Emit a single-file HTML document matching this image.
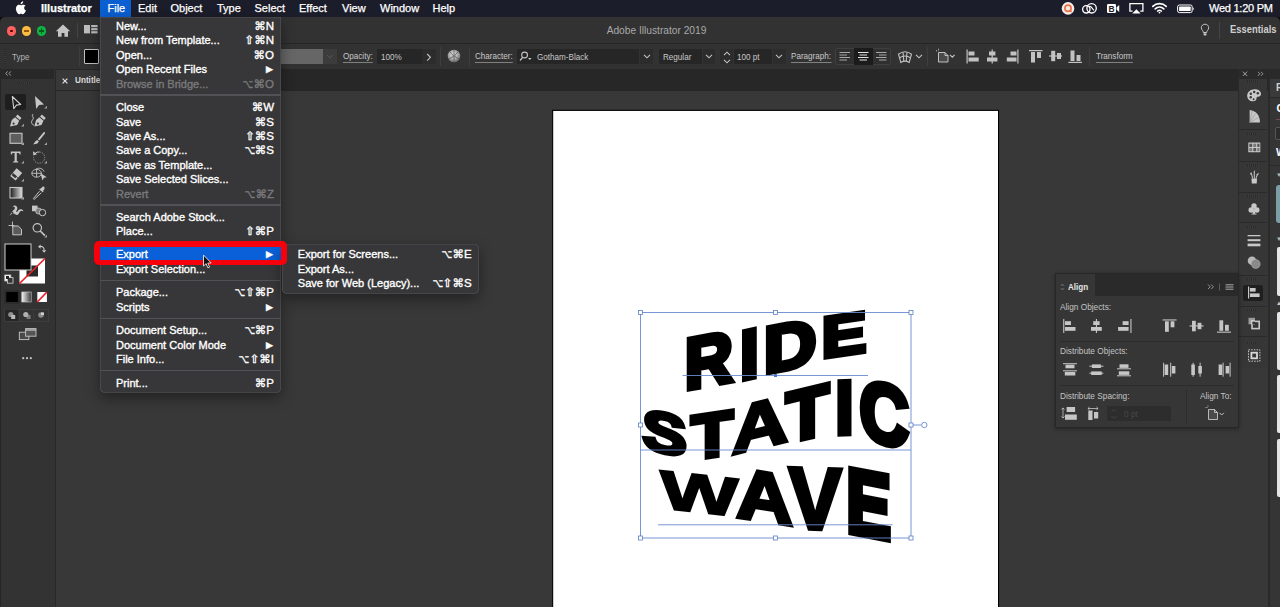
<!DOCTYPE html>
<html><head><meta charset="utf-8">
<style>
*{box-sizing:border-box;margin:0;padding:0}
html,body{width:1280px;height:607px;overflow:hidden;background:#3a3a3a;font-family:"Liberation Sans","DejaVu Sans",sans-serif;}
.abs{position:absolute}
#menubar{position:absolute;left:0;top:0;width:1280px;height:17px;background:#1c1d2a;color:#fff;font-size:11px;}
#menubar span{position:absolute;top:1px;line-height:15px;white-space:nowrap;-webkit-text-stroke:0.25px}
#titlebar{position:absolute;left:0;top:17px;width:1280px;height:27px;background:#323232;border-radius:5px 5px 0 0;border-bottom:1px solid #262626}
#ctrlbar{position:absolute;left:0;top:44px;width:1280px;height:25px;background:#323232;color:#c8c8c8;font-size:9px}
#ctrlbar span{position:absolute;white-space:nowrap;line-height:12px;transform:scaleX(.9);transform-origin:0 50%}
#tabbar{position:absolute;left:0;top:69px;width:1280px;height:22px;background:#272727}
#canvas{position:absolute;left:54px;top:91px;width:1226px;height:516px;background:#383838}
#toolbox{position:absolute;left:0;top:69px;width:55.500px;height:538px;background:#333;border-right:1.500px solid #282828;border-left:1px solid #262626}
#artboard{position:absolute;left:553px;top:110px;width:446px;height:500px;background:#fff;border:1px solid #000}
.menu{position:absolute;background:#373739;color:#fff;font-size:11px;-webkit-text-stroke:0.35px;box-shadow:0 0 0 0.6px rgba(110,110,115,.55) inset,0 5px 14px rgba(0,0,0,.4);}
.menu .it{position:absolute;left:0;right:0;height:15px;line-height:15px;white-space:nowrap;margin-top:.4px}
.menu .it b{font-weight:normal;position:absolute;left:16px}
.menu .it i{font-style:normal;position:absolute;right:7px;font-size:11.5px}
.menu .dis{color:#7a7a7c}
.menu .sep{position:absolute;left:0;right:0;height:1.300px;background:#525256}
.fld{position:absolute;top:5px;height:15px;background:#262626;border-radius:1px}
#ctrlbar .ul{border-bottom:1px solid #808080;line-height:11px}
.menu .sel{background:#0a60d8;height:14.400px!important;line-height:14.400px!important;margin-top:0!important}
.menu .arr{font-size:9px!important;right:8px!important}
.lbl{position:absolute;font-size:9px;color:#c4c4c4;line-height:12px;white-space:nowrap;transform:scaleX(.92);transform-origin:0 50%}
.menu .it i u{text-decoration:none;display:inline-block;transform:scaleX(.8);transform-origin:100% 50%;margin-left:-2px}
</style></head><body>
<div id="canvas"></div>
<svg class="abs" id="art" style="left:0;top:0" width="1280" height="607" viewBox="0 0 1280 607">
<rect x="552.650" y="110.350" width="445.900" height="500" fill="#fff" stroke="#000" stroke-width="1.100"/>
<defs><filter id="bl" x="-5%" y="-5%" width="110%" height="110%"><feGaussianBlur stdDeviation="0.55"/></filter></defs>
<g filter="url(#bl)" font-family="Liberation Sans, sans-serif" font-weight="bold" font-size="100" fill="#000" stroke="#000" stroke-width="7.5" stroke-linejoin="miter">
<text stroke-width="7.5" transform="matrix(0.667 -0.124 0 0.721 684.73 389.76)">R</text>
<text stroke-width="7.5" transform="matrix(0.676 -0.146 0 0.693 739.91 380.13)">I</text>
<text stroke-width="7.5" transform="matrix(0.730 -0.138 0 0.659 763.65 373.69)">D</text>
<text stroke-width="7.5" transform="matrix(0.675 -0.097 0 0.578 821.41 358.02)">E</text>
<text stroke-width="7.5" transform="matrix(0.663 0.145 0 0.566 642.56 447.74)">S</text>
<text stroke-width="7.5" transform="matrix(0.684 -0.102 0 0.623 691.21 459.69)">T</text>
<text stroke-width="5.0" transform="matrix(0.786 -0.191 0 0.667 731.50 454.83)">A</text>
<text stroke-width="7.5" transform="matrix(0.703 -0.169 0 0.709 785.96 442.89)">T</text>
<text stroke-width="7.5" transform="matrix(0.644 -0.023 0 0.752 835.60 433.90)">I</text>
<text stroke-width="7.5" transform="matrix(0.682 0.170 0 0.845 859.46 436.92)">C</text>
<text stroke-width="3.5" transform="matrix(0.827 0.091 0 0.544 660.26 507.95)">W</text>
<text stroke-width="5.0" transform="matrix(0.791 0.123 0 0.713 736.00 516.97)">A</text>
<text stroke-width="5.0" transform="matrix(0.791 0.027 0 0.874 788.82 527.91)">V</text>
<text stroke-width="7.5" transform="matrix(0.671 0.129 0 0.913 846.22 531.19)">E</text>
</g>
<g fill="none" stroke="#6a8bd0" stroke-width="0.9">
<rect x="640.500" y="312.500" width="270.500" height="225.500"/>
<path d="M682.500 375.500H868M640.500 450H911M658 524.800H892.500M913 425H921"/>
<circle cx="924.300" cy="425" r="2.700" fill="#fff"/>
</g>
<rect x="774" y="374" width="3" height="3" fill="#4a78d8"/>
<rect x="638.5" y="310.5" width="4" height="4" fill="#fff" stroke="#5b7fc7" stroke-width="0.8"/><rect x="773.5" y="310.5" width="4" height="4" fill="#fff" stroke="#5b7fc7" stroke-width="0.8"/><rect x="909.0" y="310.5" width="4" height="4" fill="#fff" stroke="#5b7fc7" stroke-width="0.8"/><rect x="638.5" y="423.0" width="4" height="4" fill="#fff" stroke="#5b7fc7" stroke-width="0.8"/><rect x="909.0" y="423.0" width="4" height="4" fill="#fff" stroke="#5b7fc7" stroke-width="0.8"/><rect x="638.5" y="536.0" width="4" height="4" fill="#fff" stroke="#5b7fc7" stroke-width="0.8"/><rect x="773.5" y="536.0" width="4" height="4" fill="#fff" stroke="#5b7fc7" stroke-width="0.8"/><rect x="909.0" y="536.0" width="4" height="4" fill="#fff" stroke="#5b7fc7" stroke-width="0.8"/>
</svg>
<div class="abs" style="left:0;top:17px;width:1280px;height:8px;background:#0c0c10"></div>
<div id="tabbar">
<div class="abs" style="left:56px;top:0.500px;width:225px;height:20.500px;background:#383838"></div>
<svg class="abs" style="left:61.500px;top:8.500px" width="6" height="6" viewBox="0 0 6 6"><path d="M0.600 0.600l4.800 4.800M5.400 0.600L0.600 5.400" stroke="#e0e0e0" stroke-width="1.200"/></svg>
<div class="abs" style="left:74.500px;top:5px;font-size:9.500px;font-weight:bold;color:#dcdcdc;line-height:12px;white-space:nowrap;transform:scaleX(.86);transform-origin:0 50%">Untitled-1*</div>
</div>
<div id="toolbox"><div class="abs" style="left:-1px;top:0;width:54px;height:538px">
<div class="abs" style="left:0;top:0;width:54px;height:9.500px;background:#282828"></div>
<svg class="abs" style="left:4.500px;top:2px" width="7" height="5" viewBox="0 0 7 5"><path d="M2.600 0.400L0.800 2.500l1.800 2.100M5.800 0.400L4 2.500l1.800 2.100" fill="none" stroke="#a8a8a8" stroke-width="0.900"/></svg>
<div class="abs" style="left:19px;top:12.500px;width:15px;height:2.500px;background:repeating-linear-gradient(90deg,#2a2a2a 0 1px,#3a3a3a 1px 2px)"></div>
<div class="abs" style="left:5px;top:25px;width:21px;height:16px;background:#1e1e1e;border-radius:2px"></div>
<svg class="abs" style="left:0;top:0" width="54" height="150" viewBox="0 69 54 150">
<g fill="#c6c6c6" stroke="none">
<!-- row1: selection tools (center y 102.500) -->
<path d="M12.300 96.500l8.400 8-4.300 0.600-2.600 3.600z" fill="none" stroke="#d0d0d0" stroke-width="1.100" stroke-linejoin="round"/>
<path d="M35 96l9 8.600-5 0.500-2.800 3.900z"/>
<path d="M47 108.500v-2.800l-2.800 2.800z" fill="#a4a4a4"/>
<!-- row2: pen, curvature (y 120.500) -->
<g transform="translate(9.300 113) scale(1.15)"><path d="M7.200 1.300l3.400 3-1.500 1.800-3.500-3zM5 3.800l3.600 3-1.700 3.600L0.600 11.800 2.200 6zM3.700 8.300a0.900 0.900 0 1 0 0.100 0z" fill-rule="evenodd"/></g>
<path d="M24 126.500v-2.800l-2.800 2.800z" fill="#a4a4a4"/>
<g transform="translate(33.600 113) scale(1.15)"><path d="M7.200 1.300l3.400 3-1.500 1.800-3.500-3zM5 3.800l3.600 3-1.700 3.600L0.600 11.800 2.200 6zM3.700 8.300a0.900 0.900 0 1 0 0.100 0z" fill-rule="evenodd"/></g>
<path d="M33.200 114c-2.600 2 1.600 3.200-0.500 5.600-1.600 1.800-1.700 4.600 1.200 5.400" fill="none" stroke="#c6c6c6" stroke-width="1"/>
<!-- row3: rect, brush (y 138.500) -->
<rect x="10" y="133.300" width="12" height="10" fill="#5e5e5e" stroke="#c6c6c6" stroke-width="1.100"/>
<path d="M24 145v-2.800l-2.800 2.800z" fill="#a4a4a4"/>
<path d="M44.600 132.200c0.700 0.400 0.500 1.200 0 1.900l-5.300 6.400-1.500-1.200 5.200-6.400c0.500-0.700 1.100-1 1.600-0.700zM37.200 140l1.600 1.300c-0.400 2-2.600 3.300-5.800 3 1.600-0.800 1.600-3.200 4.200-4.300z"/>
<path d="M47 145v-2.800l-2.800 2.800z" fill="#a4a4a4"/>
<!-- row4: type, rotate (y 157) -->
<path d="M10.800 151.500h9.800v2.900h-1c-0.200-1.200-0.500-1.500-1.600-1.500h-1.200v7.500c0 0.800 0.300 1 1.500 1.100v0.900h-5.200v-0.900c1.200-0.100 1.500-0.300 1.500-1.100v-7.500h-1.200c-1.100 0-1.400 0.300-1.600 1.500h-1z"/>
<path d="M24 163.500v-2.800l-2.800 2.800z" fill="#a4a4a4"/>
<path d="M35.200 153.200a5.600 5.600 0 0 1 4.200-1.200" fill="none" stroke="#c6c6c6" stroke-width="1"/>
<path d="M39.400 152a5.600 5.600 0 1 1-5.800 5" fill="none" stroke="#a0a0a0" stroke-width="0.800" stroke-dasharray="1.500 1"/>
<path d="M33 151.200l0.300 4.200 3.700-1.200z"/>
<path d="M47 163.500v-2.800l-2.800 2.800z" fill="#a4a4a4"/>
<!-- row5: eraser, shape builder (y 175) -->
<path d="M16.600 168.300l5.600 4.600-6.600 7.600-5.400-4.500z" />
<path d="M12.400 173.300l5.500 4.600" stroke="#353535" stroke-width="0.900"/>
<path d="M11.700 175.200l3.500 3 1.700-2-3.600-3z" fill="#353535"/>
<path d="M24 181.500v-2.800l-2.800 2.800z" fill="#a4a4a4"/>
<g fill="none" stroke="#c6c6c6" stroke-width="0.900"><ellipse cx="36.600" cy="173.300" rx="4.800" ry="3.900"/><path d="M36.600 169.400v7.800M31.800 173.300h9.600"/><path d="M36 169c3-1.600 7.200-0.600 8 2.600"/></g>
<path d="M40.500 173l6.200 4.300-2.800 0.500-1.500 2.800z"/>
<!-- row6: gradient, eyedropper (y 193) -->
<rect x="10" y="187.500" width="12" height="10.500" fill="url(#gg)" stroke="#c6c6c6" stroke-width="1.100"/>
<path d="M24 199.500v-2.800l-2.800 2.800z" fill="#a4a4a4"/>
<path d="M43.600 186.600c1.100 0.700 1.300 1.900 0.600 2.800l-1.100 1.300 0.600 0.500-0.900 1.100-3.600-2.900 0.900-1.100 0.600 0.500 1.100-1.400c0.600-0.800 1.200-1.100 1.800-0.800z"/>
<path d="M39.500 191.200l-5.800 7c-0.500 0.600-0.200 1.300 0.700 1l6.900-6.400" fill="none" stroke="#c6c6c6" stroke-width="1"/>
<!-- row7: puppet warp, blend (y 211) -->
<path d="M9.500 215.500c1.500-0.500 2.300-2.300 3.500-2.200 1.500 0 2 1.800 4 1.600 2.500-0.200 1.800-3.600 4-4 1-0.200 1.600 0.600 2.400 0.300-0.800-2.300-3.700-2.600-5.200-0.600-1.100 1.500-1.300 1.600-2.200 0.700 1-1 2.400-3.400 0.200-5.300-1.400-1.200-3.200-0.200-3.700 0.700 1.600-0.500 2.600 0.300 2.300 1.700-0.300 1.600-2.400 1.800-3.200 3.800-0.300 0.800-1 2-2.100 3.300z"/>
<circle cx="12.300" cy="212.600" r="1" fill="#353535"/>
<rect x="32" y="205.600" width="5.600" height="5.600"/>
<circle cx="38.600" cy="211" r="3" fill="#7a7a7a" stroke="#c6c6c6" stroke-width="0.800"/>
<circle cx="42.500" cy="212.600" r="3.200" fill="#353535" stroke="#c6c6c6" stroke-width="1"/>
</g></svg>
<svg class="abs" style="left:0;top:150px" width="54" height="150" viewBox="0 219 54 150">
<defs><linearGradient id="gg" x1="0" x2="1"><stop offset="0" stop-color="#1a1a1a"/><stop offset="1" stop-color="#e0e0e0"/></linearGradient></defs>
<!-- row8: artboard, zoom (y 229) -->
<g fill="none" stroke="#c6c6c6" stroke-width="1"><path d="M12.500 221.500v6M8.500 225.500h6" stroke-width="0.900"/><path d="M12.800 226h5.400l3.300 3.200v5.600h-8.700z" fill="#5a5a5a"/></g>
<circle cx="37.300" cy="227.800" r="4.200" fill="none" stroke="#c6c6c6" stroke-width="1.200"/><path d="M40.300 231l4.600 4.600" stroke="#c6c6c6" stroke-width="1.700"/>
<path d="M47 237.500v-2.800l-2.800 2.800z" fill="#a4a4a4"/>
<!-- fill/stroke -->
<rect x="19.500" y="258.500" width="25.500" height="25" fill="#fff"/><rect x="26.500" y="265.500" width="11.500" height="11" fill="#2a2a2a"/>
<path d="M19.500 283.500L45 258.500" stroke="#e8202a" stroke-width="1.700"/>
<rect x="5" y="244" width="26" height="26" fill="#000" stroke="#cfcfcf" stroke-width="1"/>
<path d="M39.500 246.500c3-0.600 4.800 1 4.600 4" fill="none" stroke="#c6c6c6" stroke-width="1.100"/><path d="M38 246.700l2.600-2.200v4.200zM44.200 252.700l-2.300-2.500h4.400z" fill="#c6c6c6"/>
<rect x="4.800" y="275" width="6" height="6" fill="#fff" stroke="#c6c6c6" stroke-width="0.800"/><rect x="7.400" y="277.600" width="5.600" height="5.600" fill="#353535" stroke="#c6c6c6" stroke-width="0.900"/><rect x="6" y="276" width="3" height="3" fill="#222"/>
<!-- color row -->
<rect x="4.600" y="290.300" width="15" height="13.400" fill="#2a2a2a"/>
<rect x="6.300" y="292" width="11.600" height="10" fill="#000"/>
<rect x="21.800" y="292" width="9.400" height="10" fill="url(#gg2)" stroke="#cfcfcf" stroke-width="0.600"/>
<rect x="37.300" y="292" width="9.600" height="10" fill="#fff"/><path d="M37.300 302L46.900 292" stroke="#e8202a" stroke-width="1.800"/>
<!-- draw modes -->
<rect x="4.800" y="309.300" width="43.800" height="12" fill="none" stroke="#424242" stroke-width="0.800"/>
<rect x="5.200" y="309.700" width="13.600" height="11.200" fill="#262626"/>
<path d="M19.200 309.300v12M33.800 309.300v12" stroke="#424242" stroke-width="0.800"/>
<circle cx="10.800" cy="314.500" r="2.600" fill="#909090"/><rect x="11.200" y="315" width="4" height="4" fill="#b8b8b8"/>
<rect x="26.600" y="315" width="4" height="4" fill="#7a7a7a"/><circle cx="25.800" cy="314.500" r="2.600" fill="#b0b0b0"/>
<circle cx="41" cy="315" r="2.800" fill="#8a8a8a"/><path d="M41 315h3v-2.600h-3z" fill="#d0d0d0"/>
<!-- screen mode -->
<rect x="19.300" y="332.200" width="9.600" height="7.400" fill="#4a4a4a" stroke="#c6c6c6" stroke-width="0.900"/>
<rect x="25.600" y="328.600" width="10.400" height="7.600" fill="#555" stroke="#c6c6c6" stroke-width="0.900"/><path d="M25.600 330h10.400" stroke="#c6c6c6" stroke-width="1.300"/>
<circle cx="23.200" cy="358.200" r="1.100" fill="#c6c6c6"/><circle cx="27" cy="358.200" r="1.100" fill="#c6c6c6"/><circle cx="30.800" cy="358.200" r="1.100" fill="#c6c6c6"/>
<defs><linearGradient id="gg2" x1="0" x2="1"><stop offset="0" stop-color="#f4f4f4"/><stop offset="1" stop-color="#3a3a3a"/></linearGradient></defs>
</svg>
</div></div>
<div id="ctrlbar">
<div class="abs" style="left:4px;top:5px;width:2px;height:15px;background:repeating-linear-gradient(#282828 0 1px,#3a3a3a 1px 2px)"></div>
<span style="left:11.5px;top:6.5px;color:#b4b4b4">Type</span>
<div class="abs" style="left:79px;top:3px;width:1px;height:19px;background:#3e3e3e"></div>
<div class="abs" style="left:84px;top:5px;width:14.5px;height:15px;background:#000;border:1px solid #c0c0c0;border-radius:1px"></div>
<div class="abs" style="left:280px;top:5px;width:43px;height:15px;background:#666"></div>
<div class="abs" style="left:323px;top:5px;width:14px;height:15px;background:#3c3c3c"></div>
<svg class="abs" style="left:326px;top:10px" width="8" height="5" viewBox="0 0 8 5"><path d="M1 1l3 3 3-3" fill="none" stroke="#555" stroke-width="1"/></svg>
<span class="ul" style="left:342.5px;top:6.5px">Opacity:</span>
<div class="fld" style="left:377px;width:44.500px"></div><span style="left:380.5px;top:6.5px">100%</span>
<div class="fld" style="left:422px;width:13.500px;background:#2c2c2c"></div>
<svg class="abs" style="left:425.500px;top:8.500px" width="6" height="9" viewBox="0 0 6 9"><path d="M1.200 1l3.200 3.300-3.200 3.300" fill="none" stroke="#c4c4c4" stroke-width="1.100"/></svg>
<div class="abs" style="left:440px;top:3px;width:1px;height:19px;background:#3e3e3e"></div>
<svg class="abs" style="left:447px;top:5px" width="14" height="14" viewBox="0 0 14 14"><defs><radialGradient id="gl" cx="0.45" cy="0.4" r="0.6"><stop offset="0" stop-color="#e8e8e8"/><stop offset="0.600" stop-color="#a8a8a8"/><stop offset="1" stop-color="#6a6a6a"/></radialGradient></defs><circle cx="7" cy="7" r="6.300" fill="url(#gl)"/><g stroke="#555" stroke-width="0.700" fill="none"><path d="M7 0.700v12.600M7 7L1.600 10.200M7 7l5.400 3.200M7 7L2.500 2.500M7 7l4.500-4.500"/></g><circle cx="7" cy="7" r="1.600" fill="#777"/></svg>
<div class="abs" style="left:468.500px;top:3px;width:1px;height:19px;background:#3e3e3e"></div>
<span class="ul" style="left:475px;top:6.500px">Character:</span>
<div class="fld" style="left:516.500px;width:122px"></div>
<svg class="abs" style="left:519px;top:7px" width="14" height="11" viewBox="0 0 14 11"><circle cx="5.600" cy="4" r="2.900" fill="none" stroke="#c4c4c4" stroke-width="1.100"/><path d="M3.700 6.300L1 9.500" stroke="#c4c4c4" stroke-width="1.300"/><path d="M9 7h3.600l-1.800 2z" fill="#c4c4c4"/></svg>
<span style="left:536.500px;top:6.500px">Gotham-Black</span>
<div class="fld" style="left:639.500px;width:13px;background:#2c2c2c"></div>
<svg class="abs chev" style="left:642.500px;top:10px" width="8" height="5" viewBox="0 0 8 5"><path d="M1 0.800l3 3 3-3" fill="none" stroke="#c4c4c4" stroke-width="1.100"/></svg>
<div class="fld" style="left:658.500px;width:43px"></div><span style="left:663px;top:6.500px">Regular</span>
<div class="fld" style="left:702.500px;width:12px;background:#2c2c2c"></div>
<svg class="abs chev" style="left:704.500px;top:10px" width="8" height="5" viewBox="0 0 8 5"><path d="M1 0.800l3 3 3-3" fill="none" stroke="#c4c4c4" stroke-width="1.100"/></svg>
<div class="fld" style="left:720px;width:13px;background:#2c2c2c"></div>
<svg class="abs" style="left:722.500px;top:6.500px" width="8" height="13" viewBox="0 0 8 13"><path d="M1 4.200l3-3 3 3M1 8.800l3 3 3-3" fill="none" stroke="#c4c4c4" stroke-width="1.100"/></svg>
<div class="fld" style="left:734px;width:37.500px"></div><span style="left:736.500px;top:6.500px">100 pt</span>
<div class="fld" style="left:772.500px;width:13px;background:#2c2c2c"></div>
<svg class="abs chev" style="left:775px;top:10px" width="8" height="5" viewBox="0 0 8 5"><path d="M1 0.800l3 3 3-3" fill="none" stroke="#c4c4c4" stroke-width="1.100"/></svg>
<span class="ul" style="left:791px;top:6.500px">Paragraph:</span>
<div class="abs" style="left:835px;top:4px;width:56px;height:17px;border:1px solid #3f3f3f;border-radius:2px;background:#2f2f2f"></div>
<div class="abs" style="left:854px;top:4px;width:18.500px;height:17px;background:#1b1b1b"></div>
<svg class="abs" style="left:835px;top:4px" width="56" height="17" viewBox="0 0 56 17"><g stroke="#a8a8a8" stroke-width="1"><path d="M4.500 4.500h10.500M4.500 7h7.500M4.500 9.500h10.500M4.500 12h7.500"/><path d="M41 4.500h10.500M44 7h7.500M41 9.500h10.500M44 12h7.500"/></g><g stroke="#e4e4e4" stroke-width="1.100"><path d="M23 4.500h10.500M24.500 7h7.500M23 9.500h10.500M24.500 12h7.500"/></g></svg>
<svg class="abs" style="left:896.500px;top:4.500px" width="16" height="16" viewBox="0 0 16 16"><g fill="none" stroke="#c0c0c0" stroke-width="1.100"><path d="M1.500 5.200c4-3 9-3 13 0l-2.300 8.300c-2.700-1.700-5.700-1.700-8.400 0z"/><path d="M6 3.300l0.800 9M10 3.300l-0.800 9M2.500 8.700c3.600-2.200 7.400-2.200 11 0"/></g></svg>
<svg class="abs chev" style="left:914.500px;top:10px" width="8" height="5" viewBox="0 0 8 5"><path d="M1 0.800l3 3 3-3" fill="none" stroke="#c4c4c4" stroke-width="1.100"/></svg>
<div class="abs" style="left:926.500px;top:3px;width:1px;height:19px;background:#3e3e3e"></div>
<svg class="abs" style="left:934px;top:4px" width="24" height="17" viewBox="0 0 24 17"><g fill="none" stroke="#c0c0c0" stroke-width="1"><path d="M4.500 4.500h6.500l3 3v6.500h-9.500z" fill="#4a4a4a"/><path d="M11 4.500v3h3"/></g><path d="M2 2.800h2.500M4.500 0.800v2" stroke="#c0c0c0" stroke-width="1" stroke-dasharray="1 1"/><path d="M16 6.800l2.300 2.300 2.300-2.300" fill="none" stroke="#c4c4c4" stroke-width="1.100"/></svg>
<!-- align icons -->
<svg class="abs" style="left:962px;top:3px" width="124" height="19" viewBox="0 0 124 19"><g fill="#c2c2c2">
<rect x="4.500" y="2.500" width="1.200" height="14"/><rect x="6.500" y="4.500" width="6" height="4"/><rect x="6.500" y="10.500" width="10.200" height="4"/>
<rect x="29.600" y="2.500" width="1.200" height="14"/><rect x="27" y="4.500" width="6.400" height="4"/><rect x="25" y="10.500" width="10.400" height="4"/>
<rect x="55.300" y="2.500" width="1.200" height="14"/><rect x="48.500" y="4.500" width="6" height="4"/><rect x="44.800" y="10.500" width="9.700" height="4"/>
<rect x="67" y="3" width="13.600" height="1.200"/><rect x="69" y="5" width="4" height="10.500"/><rect x="75" y="5" width="4" height="6"/>
<rect x="87" y="8.400" width="13" height="1.200"/><rect x="89.200" y="3.800" width="4" height="10.400"/><rect x="95" y="6" width="4" height="6"/>
<rect x="106.400" y="14.800" width="13.600" height="1.200"/><rect x="108.500" y="3.500" width="4" height="10.500"/><rect x="114.500" y="8" width="4" height="6"/>
</g></svg>
<div class="abs" style="left:1089px;top:3px;width:1px;height:19px;background:#3e3e3e"></div>
<span class="ul" style="left:1096px;top:6.500px">Transform</span>
</div>
<div id="titlebar">
<div class="abs" style="left:6.6px;top:9.3px;width:9.4px;height:9.4px;border-radius:50%;background:#fc615d"></div><div class="abs" style="left:10px;top:12.7px;width:2.6px;height:2.6px;border-radius:50%;background:#4c0102"></div>
<div class="abs" style="left:21.8px;top:9.3px;width:9.4px;height:9.4px;border-radius:50%;background:#fdbd41"></div><div class="abs" style="left:23.7px;top:13.3px;width:5.6px;height:1.5px;background:#985712"></div>
<div class="abs" style="left:36.9px;top:9.3px;width:9.4px;height:9.4px;border-radius:50%;background:#0bb546"></div><div class="abs" style="left:38.8px;top:13.3px;width:5.6px;height:1.5px;background:#0b5a16"></div><div class="abs" style="left:40.85px;top:11.2px;width:1.5px;height:5.6px;background:#0b5a16"></div>
<svg class="abs" style="left:55px;top:7px" width="16" height="14" viewBox="0 0 16 14"><path fill="#c4c4c4" d="M8 0.4L0.8 7.2h2.2v5.6h3.6V9h2.8v3.8h3.6V7.2h2.2z"/></svg>
<div class="abs" style="left:77px;top:6px;width:1px;height:15px;background:#454545"></div>
<svg class="abs" style="left:84px;top:8px" width="14" height="9" viewBox="0 0 14 9"><g fill="#bdbdbd"><rect x="0" y="0" width="6" height="8.4"/><rect x="7.2" y="0" width="6.4" height="2.2"/><rect x="7.2" y="3.1" width="6.4" height="2.2"/><rect x="7.2" y="6.2" width="6.4" height="2.2"/></g></svg>
<div class="abs" style="left:0;width:1313px;top:8.300px;text-align:center;font-size:10.2px;color:#a9a9a9;line-height:12px">Adobe Illustrator 2019</div>
<svg class="abs" style="left:1199px;top:6px" width="12" height="14" viewBox="0 0 12 14"><g fill="none" stroke="#c8c8c8" stroke-width="1"><path d="M6 1.2c-2.2 0-3.7 1.6-3.7 3.5 0 1.4 0.8 2.2 1.4 3 0.4 0.6 0.6 1 0.6 1.8h3.4c0-0.8 0.2-1.2 0.6-1.8 0.6-0.8 1.4-1.6 1.4-3 0-1.9-1.5-3.5-3.700-3.500z"/></g><rect x="4.5" y="10.200" width="3" height="2.400" rx="0.8" fill="#c8c8c8"/></svg>
<div class="abs" style="left:1219px;top:5px;width:1px;height:17px;background:#454545"></div>
<div class="abs" style="left:1229.5px;top:7.3px;font-size:10px;font-weight:bold;color:#cfcfcf;line-height:12px;transform:scaleX(.94);transform-origin:0 50%">Essentials</div>
</div>
<div id="menubar">
<svg class="abs" style="left:15px;top:1px" width="12" height="14" viewBox="0 0 12 14"><path fill="#fff" d="M8.2 0.2c0.1 0.8-0.2 1.5-0.7 2.1-0.5 0.6-1.2 1-1.9 0.9-0.1-0.7 0.3-1.5 0.7-2 0.5-0.6 1.3-1 1.9-1zM10.6 4.6c-0.9 0.55-1.4 1.3-1.4 2.3 0 1.2 0.7 2.1 1.7 2.5-0.25 0.8-0.65 1.6-1.2 2.4-0.5 0.7-1 1.4-1.8 1.4-0.75 0-1-0.45-1.9-0.45-0.9 0-1.2 0.45-1.9 0.47-0.75 0.03-1.3-0.75-1.85-1.5C1.1 10 0.3 7.3 1.45 5.4c0.55-0.95 1.55-1.55 2.6-1.57 0.8-0.02 1.5 0.5 2 0.5 0.45 0 1.35-0.62 2.3-0.53 0.4 0.02 1.5 0.16 2.25 0.8z"/></svg>
<span style="left:41px;font-weight:bold">Illustrator</span>
<div class="abs" style="left:100px;top:0;width:31px;height:17px;background:#0a5fd2"></div>
<span style="left:107.5px">File</span>
<span style="left:138px">Edit</span>
<span style="left:170.5px">Object</span>
<span style="left:217px">Type</span>
<span style="left:254.5px">Select</span>
<span style="left:299px">Effect</span>
<span style="left:342px">View</span>
<span style="left:380px">Window</span>
<span style="left:432.5px">Help</span>
<span style="left:1209px;letter-spacing:-0.25px">Wed 1:20 PM</span>
<!-- status icons -->
<svg class="abs" style="left:1060px;top:0" width="140" height="17" viewBox="0 0 140 17">
<circle cx="8" cy="8.4" r="6.3" fill="#f6ece8"/><circle cx="8" cy="8.2" r="3.1" fill="none" stroke="#e8734a" stroke-width="1.7"/><path d="M9.8 10.2l1.8 1.8" stroke="#e8734a" stroke-width="1.6"/>
<g fill="none" stroke="#fff" stroke-width="1.35"><circle cx="26.300" cy="9.300" r="3.700"/><circle cx="31.600" cy="8.300" r="4.700"/><path d="M28.500 6.800c1.200-0.700 2.400-0.200 3.200 0.800l2.200 2.800" stroke-width="1.100"/></g>
<rect x="47" y="4" width="9" height="9" rx="1.3" fill="#fff"/><path d="M56.6 7.2l2.6-2.2v7l-2.6-2.2z" fill="#fff"/><text x="48.6" y="11.6" font-family="Liberation Sans, sans-serif" font-weight="bold" font-size="8.5" fill="#1c1d2a">B</text>
<g fill="none" stroke="#fff" stroke-width="1.3"><path d="M72.5 11.2h-2.6v-7.6h13v7.6h-2.6"/></g><path d="M76.4 9.2l4.2 4.4h-8.4z" fill="#fff"/>
<g fill="none" stroke="#fff" stroke-width="1.7" stroke-linecap="round"><path d="M92.8 6.3c3.8-3.6 9.6-3.6 13.4 0"/><path d="M95.2 8.8c2.5-2.3 6.1-2.3 8.6 0"/><path d="M97.6 11.1c1.1-1 2.7-1 3.8 0" stroke-width="1.5"/></g><circle cx="99.5" cy="12.6" r="0.9" fill="#fff"/>
<rect x="117.6" y="5" width="14.6" height="7.6" rx="1.8" fill="none" stroke="#fff" stroke-width="1"/><rect x="119.1" y="6.5" width="11.6" height="4.6" rx="0.7" fill="#fff"/><path d="M133.2 7.5c1 0.2 1 2.4 0 2.6z" fill="#fff"/>
</svg>
</div>
<div id="dock" class="abs" style="left:1238.200px;top:69px;width:29.300px;height:298.500px;background:#363636;border-left:1px solid #2a2a2a">
<div class="abs" style="left:0;top:0;width:28px;height:9.500px;background:#2a2a2a"></div>
<svg class="abs" style="left:2.500px;top:2px" width="24" height="6" viewBox="0 0 24 6"><path d="M0.800 0.600l4.400 4.400M5.200 0.600L0.800 5" stroke="#b0b0b0" stroke-width="0.900"/><path d="M16 0.800l1.900 2-1.900 2M19 0.800l1.900 2-1.900 2" fill="none" stroke="#b0b0b0" stroke-width="0.800"/></svg>
<div class="abs" style="left:8px;top:11.3px;width:12px;height:2.500px;background:repeating-linear-gradient(90deg,#2b2b2b 0 1px,#3c3c3c 1px 2px)"></div><div class="abs" style="left:8px;top:63.8px;width:12px;height:2.500px;background:repeating-linear-gradient(90deg,#2b2b2b 0 1px,#3c3c3c 1px 2px)"></div><div class="abs" style="left:8px;top:95.3px;width:12px;height:2.500px;background:repeating-linear-gradient(90deg,#2b2b2b 0 1px,#3c3c3c 1px 2px)"></div><div class="abs" style="left:8px;top:126.3px;width:12px;height:2.500px;background:repeating-linear-gradient(90deg,#2b2b2b 0 1px,#3c3c3c 1px 2px)"></div><div class="abs" style="left:8px;top:156.8px;width:12px;height:2.500px;background:repeating-linear-gradient(90deg,#2b2b2b 0 1px,#3c3c3c 1px 2px)"></div><div class="abs" style="left:8px;top:209.3px;width:12px;height:2.500px;background:repeating-linear-gradient(90deg,#2b2b2b 0 1px,#3c3c3c 1px 2px)"></div><div class="abs" style="left:8px;top:239.8px;width:12px;height:2.500px;background:repeating-linear-gradient(90deg,#2b2b2b 0 1px,#3c3c3c 1px 2px)"></div><div class="abs" style="left:8px;top:272.8px;width:12px;height:2.500px;background:repeating-linear-gradient(90deg,#2b2b2b 0 1px,#3c3c3c 1px 2px)"></div><div class="abs" style="left:0;top:60.0px;width:28px;height:1px;background:#2a2a2a"></div><div class="abs" style="left:0;top:91.5px;width:28px;height:1px;background:#2a2a2a"></div><div class="abs" style="left:0;top:122.5px;width:28px;height:1px;background:#2a2a2a"></div><div class="abs" style="left:0;top:153.0px;width:28px;height:1px;background:#2a2a2a"></div><div class="abs" style="left:0;top:206.0px;width:28px;height:1px;background:#2a2a2a"></div><div class="abs" style="left:0;top:236.5px;width:28px;height:1px;background:#2a2a2a"></div><div class="abs" style="left:0;top:267.0px;width:28px;height:1px;background:#2a2a2a"></div>
<div class="abs" style="left:4px;top:215.500px;width:20px;height:16.500px;background:#1f1f1f;border-radius:2px"></div>
<svg class="abs" style="left:0.800px;top:0" width="28" height="300" viewBox="1240 69 28 300">
<g fill="#c8c8c8">
<!-- color palette -->
<path d="M1254.800 89.200c4 0 6.200 2.200 6.200 4.800 0 2-1.500 2.700-2.800 2.700-1.200 0-1.800 0.500-1.700 1.600 0.100 1.500-0.900 3-3.300 3-3.600 0-6-2.400-6-5.600 0-3.600 3.200-6.500 7.600-6.500z"/>
<g fill="#363636"><circle cx="1250.800" cy="93.800" r="1.200"/><circle cx="1254.200" cy="92" r="1.200"/><circle cx="1257.800" cy="93.200" r="1.200"/><circle cx="1250.700" cy="97.300" r="1.200"/><circle cx="1253.600" cy="99.200" r="1"/></g>
<!-- color guide -->
<path d="M1249.600 110v12.500h10.400c0-7-4-12-10.400-12.500z"/>
<path d="M1249.600 122.500l9-5M1249.600 122.500l6-9M1249.600 122.500l2.600-11.500" stroke="#8a8a8a" stroke-width="0.500"/>
<!-- swatches -->
<rect x="1248.300" y="142.600" width="12" height="9.600" rx="0.500"/>
<g fill="#555"><rect x="1249.300" y="143.700" width="2.900" height="3.300"/><rect x="1253.300" y="143.700" width="2.900" height="3.300" fill="#777"/><rect x="1257.300" y="143.700" width="2.200" height="3.300"/><rect x="1249.300" y="148" width="2.900" height="3.200" fill="#777"/><rect x="1253.300" y="148" width="2.900" height="3.200"/><rect x="1257.300" y="148" width="2.200" height="3.200" fill="#777"/></g>
<!-- brushes -->
<path d="M1251.500 178.500h5.500l-0.300 5h-4.900z"/>
<path d="M1252.600 178.500l-1.200-5.200M1254.300 178.500v-6.300M1255.900 178.500l1.600-4.700" stroke="#c8c8c8" stroke-width="1"/>
<path d="M1249.800 174.300l1.400-2.300 0.700 2.400zM1253.500 172.600l0.800-2.500 0.800 2.500zM1256.300 174.400l2.800-1.600-1.300 2.600z"/>
<!-- symbols (club) -->
<circle cx="1254" cy="206" r="2.700"/><circle cx="1251.200" cy="210" r="2.700"/><circle cx="1256.800" cy="210" r="2.700"/><path d="M1253.400 209h1.200l0.700 4.700h1.200v0.900h-5v-0.900h1.200z"/>
<!-- stroke -->
<rect x="1247.600" y="235" width="12.800" height="1.300"/><rect x="1247.600" y="239.200" width="12.800" height="2"/><rect x="1247.600" y="243.600" width="12.800" height="2.700"/>
<!-- transparency -->
<circle cx="1252" cy="260.800" r="4.300" fill="#b8b8b8"/><circle cx="1255.700" cy="264" r="4.500" fill="#8a8a8a" stroke="#a8a8a8" stroke-width="0.600"/>
<!-- align (selected) -->
<rect x="1248" y="286.500" width="1.200" height="12"/><rect x="1250" y="288" width="5.600" height="3.600"/><rect x="1250" y="293.400" width="9.600" height="3.600"/>
<!-- pathfinder -->
<rect x="1248.500" y="317.800" width="6.500" height="6.500" fill="#9a9a9a"/><rect x="1252" y="321.400" width="7.200" height="7.200" fill="none" stroke="#c8c8c8" stroke-width="1.600"/><rect x="1250.800" y="320" width="4.200" height="4.300" fill="#c8c8c8"/><rect x="1252.400" y="321.700" width="2.600" height="2.600" fill="#363636"/>
<!-- artboards -->
<rect x="1250.500" y="351.800" width="7.400" height="7.400" fill="#d8d8d8"/><rect x="1252.300" y="353.600" width="3.800" height="3.800" fill="#363636"/>
<rect x="1248.500" y="349.800" width="11.400" height="11.400" fill="none" stroke="#c8c8c8" stroke-width="1" stroke-dasharray="1.500 1.200"/>
</g></svg>
</div>
<div class="abs" style="left:1267.500px;top:69px;width:12.500px;height:538px;background:#2a2a2a"></div>
<div id="rpanel" class="abs" style="left:1270px;top:78.500px;width:10px;height:528.500px;background:#353535;overflow:hidden;color:#fff;font-weight:bold">
<div class="abs" style="left:0;top:0;width:10px;height:19px;background:#3a3a3a;border-bottom:1px solid #2a2a2a"></div>
<div class="abs" style="left:6px;top:3.500px;font-size:10px;line-height:12px;color:#d0d0d0">Properties</div>
<div class="abs" style="left:6.500px;top:23.500px;font-size:10.500px;line-height:12px">Character</div>
<div class="abs" style="left:6px;top:40px;width:10px;height:1px;background:#7a4a4a"></div>
<div class="abs" style="left:5px;top:48px;width:10px;height:13px;border:1px solid #555;border-radius:2px;background:#2c2c2c"></div>
<div class="abs" style="left:6px;top:67px;font-size:10.500px;line-height:12px">Warp</div>
<div class="abs" style="left:0;top:86px;width:10px;height:1px;background:#2a2a2a"></div>
<div class="abs" style="left:6px;top:92px;font-size:6px;line-height:8px;color:#bbb;font-weight:normal">▼</div>
<div class="abs" style="left:5.500px;top:106px;width:10px;height:38.500px;background:#7c9ea6;border-radius:3px 0 0 3px"></div>
<div class="abs" style="left:6px;top:156px;font-size:6px;line-height:8px;color:#bbb;font-weight:normal">▼</div>
<div class="abs" style="left:6.500px;top:168px;width:10px;height:49px;background:#e6e6e6;border-radius:2px 0 0 2px"></div>
<div class="abs" style="left:6px;top:220.500px;font-size:6px;line-height:8px;color:#ccc;font-weight:normal">▲</div>
<div class="abs" style="left:6.500px;top:233.500px;width:10px;height:57.500px;background:#e6e6e6;border-radius:2px 0 0 2px"></div>
<div class="abs" style="left:6.500px;top:296.500px;width:10px;height:57.500px;background:#e6e6e6;border-radius:2px 0 0 2px"></div>
<div class="abs" style="left:6.500px;top:360.500px;width:10px;height:58px;background:#e6e6e6;border-radius:2px 0 0 2px"></div>
</div>
<div id="alignp" class="abs" style="left:1055px;top:272.500px;width:183.500px;height:155.500px;background:#363636;border:1px solid #272727;box-shadow:0 1px 4px rgba(0,0,0,.35)">
<div class="abs" style="left:0;top:0;width:181.500px;height:22px;background:#2a2a2a"></div>
<div class="abs" style="left:0;top:0;width:39px;height:22px;background:#363636"></div>
<svg class="abs" style="left:3.500px;top:9px" width="5" height="8" viewBox="0 0 5 8"><path d="M0.800 3L2.500 1l1.700 2M0.800 5l1.700 2 1.700-2" fill="none" stroke="#8a8a8a" stroke-width="0.700"/></svg>
<div class="abs" style="left:11.500px;top:7px;font-size:9.500px;font-weight:bold;color:#e4e4e4;line-height:12px;transform:scaleX(.85);transform-origin:0 50%">Align</div>
<svg class="abs" style="left:150px;top:8px" width="30" height="10" viewBox="0 0 30 10"><path d="M2 2.500l2.200 2.300L2 7.100M5.200 2.500l2.200 2.300-2.200 2.300" fill="none" stroke="#b0b0b0" stroke-width="0.800"/><path d="M13.500 1.500v7" stroke="#6a6a6a" stroke-width="0.800"/><path d="M19.500 2.800h8M19.500 5h8M19.500 7.200h8" stroke="#b8b8b8" stroke-width="0.900"/></svg>
<div class="lbl" style="left:4px;top:27.500px">Align Objects:</div>
<div class="abs" style="left:4px;top:67px;width:174px;height:1px;background:#2c2c2c"></div>
<div class="lbl" style="left:4px;top:71.500px">Distribute Objects:</div>
<div class="abs" style="left:4px;top:111px;width:174px;height:1px;background:#2c2c2c"></div>
<div class="lbl" style="left:4px;top:116px">Distribute Spacing:</div>
<div class="lbl" style="left:144px;top:116.500px">Align To:</div>
<div class="abs" style="left:129.500px;top:116px;width:1px;height:34px;background:#2c2c2c"></div>
<div class="abs" style="left:50.500px;top:132px;width:64px;height:15.500px;background:#2d2d2d;border-radius:1px"></div>
<svg class="abs" style="left:54px;top:134px" width="8" height="12" viewBox="0 0 8 12"><path d="M1.500 4l2.500-2.500L6.500 4M1.500 8l2.500 2.500L6.500 8" fill="none" stroke="#444" stroke-width="1"/></svg>
<div class="lbl" style="left:68px;top:134.500px;color:#474747">0 pt</div>
</div>
<svg class="abs" style="left:1055px;top:272px" width="185" height="157" viewBox="1055 272 185 157"><g fill="#c6c6c6"><rect x="1063.2" y="319.0" width="1.100" height="14"/><rect x="1065.0" y="321.2" width="6" height="3.800"/><rect x="1065.0" y="327.0" width="10.500" height="3.800"/><rect x="1095.9" y="319.0" width="1.100" height="14"/><rect x="1093.2" y="321.2" width="6.400" height="3.800"/><rect x="1091.0" y="327.0" width="10.800" height="3.800"/><rect x="1130.4" y="319.0" width="1.100" height="14"/><rect x="1122.6" y="321.2" width="6" height="3.800"/><rect x="1118.1" y="327.0" width="10.500" height="3.800"/><rect x="1162.6" y="319.4" width="14" height="1.100"/><rect x="1165.0" y="321.3" width="3.800" height="10.500"/><rect x="1170.6" y="321.3" width="3.800" height="6"/><rect x="1189.6" y="325.4" width="14" height="1.100"/><rect x="1192.0" y="320.8" width="3.800" height="10.500"/><rect x="1197.6" y="322.8" width="3.800" height="6.400"/><rect x="1217.0" y="331.6" width="14" height="1.100"/><rect x="1219.4" y="320.3" width="3.800" height="10.500"/><rect x="1225.0" y="324.8" width="3.800" height="6"/><rect x="1063.0" y="363.2" width="14" height="1"/><rect x="1065.5" y="364.7" width="9" height="3.600"/><rect x="1063.0" y="370.3" width="14" height="1"/><rect x="1064.8" y="371.9" width="10.500" height="3.600"/><rect x="1089.4" y="365.7" width="14" height="1"/><rect x="1091.9" y="364.4" width="9" height="3.600"/><rect x="1089.4" y="372.7" width="14" height="1"/><rect x="1091.2" y="371.4" width="10.500" height="3.600"/><rect x="1117.0" y="368.3" width="14" height="1"/><rect x="1119.5" y="364.3" width="9" height="3.600"/><rect x="1117.0" y="375.3" width="14" height="1"/><rect x="1118.8" y="371.3" width="10.500" height="3.600"/><rect x="1163.1" y="362.7" width="1" height="14"/><rect x="1164.6" y="364.5" width="3.600" height="10.500"/><rect x="1170.2" y="362.7" width="1" height="14"/><rect x="1171.8" y="366.0" width="3.600" height="7.500"/><rect x="1192.6" y="362.7" width="1" height="14"/><rect x="1191.3" y="364.5" width="3.600" height="10.500"/><rect x="1199.6" y="362.7" width="1" height="14"/><rect x="1198.3" y="366.0" width="3.600" height="7.500"/><rect x="1222.6" y="362.7" width="1" height="14"/><rect x="1218.6" y="364.5" width="3.600" height="10.500"/><rect x="1229.6" y="362.7" width="1" height="14"/><rect x="1225.6" y="366.0" width="3.600" height="7.500"/>
<!-- distribute spacing icons -->
<rect x="1066.600" y="407" width="8.500" height="5"/><rect x="1065" y="414.500" width="11.800" height="5.300"/><path d="M1063 408v10M1061.500 409.500l1.500-1.600 1.500 1.600M1061.500 416.500l1.500 1.600 1.500-1.600" fill="none" stroke="#c6c6c6" stroke-width="0.800"/>
<rect x="1088.300" y="410.500" width="4.200" height="9.500"/><rect x="1094" y="412" width="4.200" height="6.500"/><path d="M1088 408.500h10M1089.500 407l-1.600 1.500 1.600 1.500M1096.500 407l1.600 1.500-1.600 1.500" fill="none" stroke="#c6c6c6" stroke-width="0.800"/>
<!-- align to -->
<path d="M1208.500 409.500h6l3 3v7h-9z" fill="#4a4a4a" stroke="#c6c6c6" stroke-width="0.900"/><path d="M1214.500 409.500v3h3" fill="none" stroke="#c6c6c6" stroke-width="0.900"/><path d="M1205.500 407.500h2.500M1208 405.500v2" stroke="#c6c6c6" stroke-width="0.900" stroke-dasharray="1 1" fill="none"/><path d="M1219.500 412.800l2.200 2.200 2.200-2.200" fill="none" stroke="#c6c6c6" stroke-width="1"/>
</g></svg>
<div class="menu" id="filemenu" style="left:100px;top:17px;width:181px;height:376px;border-radius:0 0 5px 5px">
<div class="it" style="top:1.7px"><b>New...</b><i>⌘N</i></div>
<div class="it" style="top:16.1px"><b>New from Template...</b><i>⇧⌘N</i></div>
<div class="it" style="top:30.5px"><b>Open...</b><i>⌘O</i></div>
<div class="it" style="top:44.9px"><b>Open Recent Files</b><i class="arr">▶</i></div>
<div class="it dis" style="top:59.3px"><b>Browse in Bridge...</b><i><u>⌥</u>⌘O</i></div>
<div class="it" style="top:82.8px"><b>Close</b><i>⌘W</i></div>
<div class="it" style="top:97.2px"><b>Save</b><i>⌘S</i></div>
<div class="it" style="top:111.6px"><b>Save As...</b><i>⇧⌘S</i></div>
<div class="it" style="top:126.0px"><b>Save a Copy...</b><i><u>⌥</u>⌘S</i></div>
<div class="it" style="top:140.4px"><b>Save as Template...</b></div>
<div class="it" style="top:154.8px"><b>Save Selected Slices...</b></div>
<div class="it dis" style="top:169.2px"><b>Revert</b><i><u>⌥</u>⌘Z</i></div>
<div class="it" style="top:192.7px"><b>Search Adobe Stock...</b></div>
<div class="it" style="top:207.1px"><b>Place...</b><i>⇧⌘P</i></div>
<div class="it sel" style="top:230.1px"><b>Export</b><i class="arr">▶</i></div>
<div class="it" style="top:244.5px"><b>Export Selection...</b></div>
<div class="it" style="top:268.1px"><b>Package...</b><i><u>⌥</u>⇧⌘P</i></div>
<div class="it" style="top:282.5px"><b>Scripts</b><i class="arr">▶</i></div>
<div class="it" style="top:305.9px"><b>Document Setup...</b><i><u>⌥</u>⌘P</i></div>
<div class="it" style="top:320.3px"><b>Document Color Mode</b><i class="arr">▶</i></div>
<div class="it" style="top:334.7px"><b>File Info...</b><i><u>⌥</u>⇧⌘I</i></div>
<div class="it" style="top:358.2px"><b>Print...</b><i>⌘P</i></div>
<div class="sep" style="top:77.4px"></div>
<div class="sep" style="top:187.4px"></div>
<div class="sep" style="top:224.9px"></div>
<div class="sep" style="top:262.9px"></div>
<div class="sep" style="top:300.6px"></div>
<div class="sep" style="top:352.9px"></div>
</div>
<div class="menu" id="submenu" style="left:281.800px;top:244.300px;width:196.800px;height:49.500px;border-radius:5px">
<div class="it" style="top:2.600px"><b>Export for Screens...</b><i><u>⌥</u>⌘E</i></div>
<div class="it" style="top:17.400px"><b>Export As...</b></div>
<div class="it" style="top:31.800px"><b>Save for Web (Legacy)...</b><i><u>⌥</u>⇧⌘S</i></div>
</div>
<div class="abs" style="left:94px;top:240.500px;width:193px;height:24.700px;border:6px solid #f5000b;border-bottom-width:5px;border-radius:5px"></div>
<svg class="abs" style="left:202px;top:254px" width="12" height="16" viewBox="0 0 12 16"><path d="M1.500 1v11l2.600-2.300 1.800 4.100 1.700-0.700-1.800-4 3.400-0.100z" fill="#111" stroke="#e8e8e8" stroke-width="0.900"/></svg>
</body></html>
